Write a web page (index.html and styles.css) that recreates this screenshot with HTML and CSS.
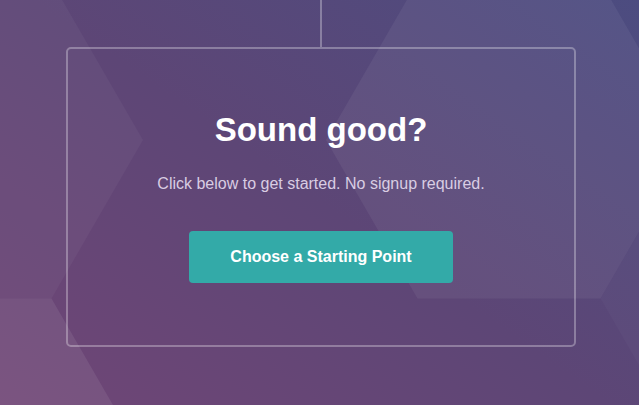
FILE: index.html
```html
<!DOCTYPE html>
<html lang="en">
<head>
    <meta charset="UTF-8">
    <meta name="viewport" content="width=device-width, initial-scale=1.0">
    <title>Sound good?</title>
    <link rel="stylesheet" href="styles.css">
</head>
<body>
    <!-- 배경 육각형 -->
    <svg class="hexes" width="639" height="405" viewBox="0 0 639 405">
        <polygon points="-223,140 -131.5,-18.5 51.5,-18.5 143,140 51.5,298.5 -131.5,298.5" fill="#fff" fill-opacity="0.04"/>
        <polygon points="-223,457 -131.5,298.5 51.5,298.5 143,457 51.5,615.5 -131.5,615.5" fill="#fff" fill-opacity="0.08"/>
        <polygon points="326,140 417.5,-18.5 600.5,-18.5 692,140 600.5,298.5 417.5,298.5" fill="#fff" fill-opacity="0.055"/>
        <polygon points="600.5,298.5 692,140 875,140 966.5,298.5 875,457 692,457" fill="#fff" fill-opacity="0.025"/>
    </svg>

    <section class="cta">
        <div class="cta-line"></div>
        <div class="cta-box">
            <h1 class="cta-title">Sound good?</h1>
            <p class="cta-text">Click below to get started. No signup required.</p>
            <a class="cta-btn" href="#">Choose a Starting Point</a>
        </div>
    </section>
</body>
</html>
```

FILE: styles.css
```css
html, body {
    margin: 0;
    height: 100%;
}

body {
    position: relative;
    overflow: hidden;
    font-family: "Liberation Sans", Arial, sans-serif;
    background: linear-gradient(35deg, #704676 0%, #5d4676 50%, #4c4c80 100%);
}

/* 배경 장식 */
.hexes {
    position: absolute;
    top: 0;
    left: 0;
    z-index: 0;
}

.cta {
    position: relative;
    z-index: 1;
    display: flex;
    flex-direction: column;
    align-items: center;
    padding-left: 3px;
}

.cta-line {
    width: 2px;
    height: 47px;
    background-color: rgba(255, 255, 255, 0.3);
}

.cta-box {
    width: 506px;
    height: 235px;
    border: 2px solid rgba(255, 255, 255, 0.3);
    border-radius: 5px;
    display: flex;
    flex-direction: column;
    align-items: center;
    padding-top: 61px;
}

.cta-title {
    margin: 0;
    font-size: 33px;
    line-height: 40px;
    font-weight: bold;
    color: #fff;
}

.cta-text {
    margin: 22px 0 0;
    font-size: 16px;
    line-height: 24px;
    color: #d9cde3;
}

.cta-btn {
    margin-top: 35px;
    width: 264px;
    height: 52px;
    display: flex;
    align-items: center;
    justify-content: center;
    background-color: #33aaa8;
    border-radius: 4px;
    color: #fff;
    font-size: 16px;
    font-weight: bold;
    text-decoration: none;
}
```
